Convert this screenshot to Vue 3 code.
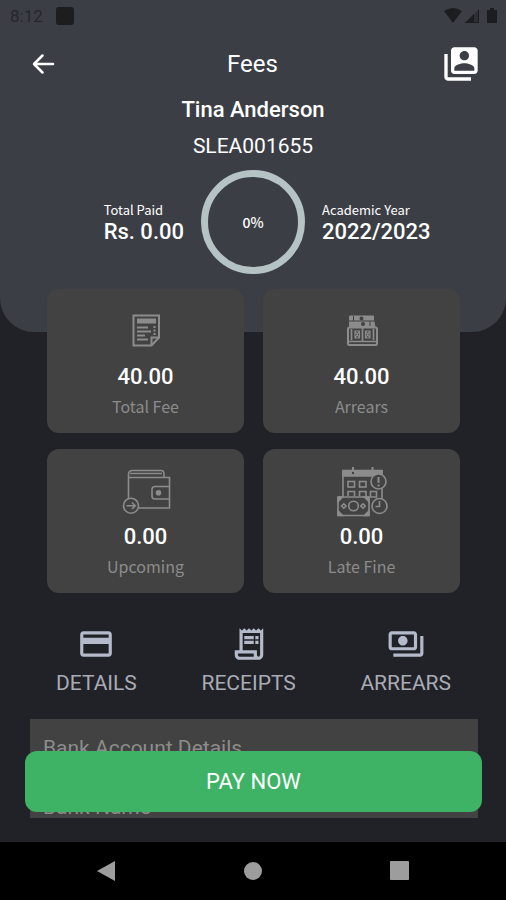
<script setup>
const cards = [
  { id: 'total', value: '40.00', label: 'Total Fee' },
  { id: 'arrears', value: '40.00', label: 'Arrears' },
  { id: 'upcoming', value: '0.00', label: 'Upcoming' },
  { id: 'fine', value: '0.00', label: 'Late Fine' },
]

const actions = [
  {
    label: 'DETAILS',
    path: 'M20 4H4c-1.11 0-1.99.89-1.99 2L2 18c0 1.11.89 2 2 2h16c1.11 0 2-.89 2-2V6c0-1.11-.89-2-2-2zm0 14H4v-6h16v6zm0-10H4V6h16v2z',
  },
  {
    label: 'RECEIPTS',
    path: 'M19.5 3.5 18 2l-1.5 1.5L15 2l-1.5 1.5L12 2l-1.5 1.5L9 2 7.5 3.5 6 2v14H3v3c0 1.66 1.34 3 3 3h12c1.66 0 3-1.34 3-3V2l-1.5 1.5zM15 20H6c-.55 0-1-.45-1-1v-1h10v2zm4-1c0 .55-.45 1-1 1s-1-.45-1-1v-3H8V5h11v14zM9 7h6v2H9zM16 7h2v2h-2zM9 10h6v2H9zM16 10h2v2h-2z',
  },
  {
    label: 'ARREARS',
    path: 'M19 14V6c0-1.1-.9-2-2-2H3c-1.1 0-2 .9-2 2v8c0 1.1.9 2 2 2h14c1.1 0 2-.9 2-2zm-2 0H3V6h14v8zm-7-7c-1.66 0-3 1.34-3 3s1.34 3 3 3 3-1.34 3-3-1.34-3-3-3zm13 0v11c0 1.1-.9 2-2 2H4v-2h17V7h2z',
  },
]
</script>

<template>
  <div class="screen">
    <main class="content">
      <header class="hero">
        <div class="status">
          <span class="time">8:12</span>
          <span class="notification"></span>
          <svg class="indicators" viewBox="0 0 56 18" aria-hidden="true">
            <path d="M0 4Q9-2 18 4L9 16Z" />
            <path d="M21 16 35 2V16Z" fill-opacity="0.45" />
            <path d="M21 16 30 7V16Z" />
            <path d="M34 3h1v13H30v-1h4Z" />
            <path d="M43 3h3V1h4v2h3v13H43Z" />
          </svg>
        </div>

        <div class="appbar">
          <button class="icon-button" type="button" aria-label="Back">
            <svg class="back" viewBox="0 0 24 24" aria-hidden="true">
              <path d="M21 12H2.500M10.500 3.500 2 12 10.500 20.500" />
            </svg>
          </button>
          <h1>Fees</h1>
          <button class="icon-button" type="button" aria-label="Switch account">
            <svg class="account" viewBox="0 0 24 24" aria-hidden="true">
              <path fill-rule="evenodd" d="M4 6H2v14c0 1.1.9 2 2 2h14v-2H4V6zm16-4H8c-1.100 0-2 .9-2 2v12c0 1.100.9 2 2 2h12c1.100 0 2-.9 2-2V4c0-1.100-.9-2-2-2zm-6 2.200c1.500 0 2.800 1.200 2.800 2.800S15.500 9.800 14 9.800 11.200 8.500 11.200 7s1.300-2.800 2.800-2.800zM20 16H8v-1.500c0-1.990 4-3 6-3s6 1.010 6 3V16z" />
            </svg>
          </button>
        </div>

        <p class="name">Tina Anderson</p>
        <p class="student-id">SLEA001655</p>

        <div class="summary">
          <dl class="stat stat-paid">
            <dt>Total Paid</dt>
            <dd>Rs. 0.00</dd>
          </dl>
          <div class="ring">0%</div>
          <dl class="stat">
            <dt>Academic Year</dt>
            <dd>2022/2023</dd>
          </dl>
        </div>
      </header>

      <section class="cards">
        <article v-for="card in cards" :key="card.id" class="card">
          <svg class="card-icon" viewBox="0 0 56 56" aria-hidden="true">
            <g v-if="card.id === 'total'">
              <path d="M15.500 12.500H41V34.500L33.500 42.500H15.500Z" stroke-width="2" />
              <path d="M33.500 42V34.500H41" stroke-width="2" />
              <path d="M19 18H38" stroke-width="5" />
              <path d="M19 24.500H30M19 28.500H33M19 32.500H27M19 36.500H30" stroke-width="2" />
              <path d="M36.500 23V32.500" stroke-width="2" stroke-dasharray="2 1.500" />
            </g>
            <g v-else-if="card.id === 'arrears'">
              <path class="solid" d="M15.500 13H39.500V17L41 23.500H15.500Z" />
              <path class="gap" d="M15 18H40M19.500 13V18M36 18V23" />
              <circle class="hole" cx="27.500" cy="15.500" r="2" />
              <circle class="hole" cx="29" cy="21" r="2" />
              <rect x="14" y="24.500" width="29" height="17.500" rx="1.500" stroke-width="2" />
              <path d="M14 38.500H43M17.500 26V37M39.500 26V37M28.500 25V38" stroke-width="1.700" />
              <path d="M21 28H25.500V35H21ZM31.500 28H36V35H31.500ZM21 28L25.500 35M25.500 28L21 35M31.500 28L36 35M36 28L31.500 35" stroke-width="1.200" />
            </g>
            <g v-else-if="card.id === 'upcoming'" stroke-width="1.600">
              <path d="M10.500 35V11.500Q10.500 7.500 14.500 7.500H43Q46 7.500 46 11V14.500" />
              <path d="M10.500 14.500H51.500V45H21M12 10.500H44" />
              <path d="M51.500 23.500H37Q34 23.500 34 26.500V33Q34 36 37 36H51.500" />
              <circle class="solid" cx="40.500" cy="29.700" r="2" />
              <circle cx="13" cy="42.700" r="7.500" />
              <path d="M8.500 42.700H17M14 39.500L17.200 42.700L14 46" />
            </g>
            <g v-else stroke-width="1.600">
              <path d="M9 33V7.500H48V35" />
              <path class="solid" d="M9 8H48V13H9Z" />
              <path d="M19 4V9M38.500 4V9" stroke-width="2" />
              <circle class="hole" cx="19" cy="10" r="1.200" />
              <rect x="14" y="18.500" width="6.500" height="5.500" />
              <rect x="25.500" y="18.500" width="6.500" height="5.500" />
              <path d="M14 33V28.500H20.500V33M25.500 33V28.500H32V33M36.500 28.500H42.500V34H36.500Z" />
              <circle class="cover" cx="44.500" cy="18.500" r="7.500" />
              <path d="M44.500 14V20M44.500 21.500V23.500" stroke-width="2" />
              <rect class="cover" x="4" y="34" width="31" height="18.500" rx="1" />
              <path class="solid" d="M4 34H8.500L4 38.500ZM35 34H30.500L35 38.500ZM4 52.500H8.500L4 48ZM35 52.500H30.500L35 48Z" />
              <circle cx="19.500" cy="43" r="4.800" />
              <path d="M9.800 40.800 12 43 9.800 45.200 7.600 43ZM29 40.800 31.200 43 29 45.200 26.800 43Z" />
              <circle class="cover" cx="45.500" cy="43" r="7.500" />
              <path d="M45.500 38V43.500H41.500" />
            </g>
          </svg>
          <strong>{{ card.value }}</strong>
          <span>{{ card.label }}</span>
        </article>
      </section>

      <nav class="actions" aria-label="Fee sections">
        <button v-for="action in actions" :key="action.label" class="action" type="button">
          <svg viewBox="0 0 24 24" aria-hidden="true"><path :d="action.path" /></svg>
          {{ action.label }}
        </button>
      </nav>

      <section class="bank">
        <h2>Bank Account Details</h2>
        <p>Bank Name</p>
      </section>

      <button class="pay" type="button">PAY NOW</button>
    </main>

    <nav class="system" aria-label="System navigation">
      <button type="button" aria-label="Back">
        <svg viewBox="0 0 22 22" aria-hidden="true"><path d="M2 11 20 1V21Z" /></svg>
      </button>
      <button type="button" aria-label="Home">
        <svg viewBox="0 0 22 22" aria-hidden="true"><circle cx="11" cy="11" r="9" /></svg>
      </button>
      <button type="button" aria-label="Recent apps">
        <svg viewBox="0 0 22 22" aria-hidden="true"><rect x="1" y="1" width="19" height="19" rx="1" /></svg>
      </button>
    </nav>
  </div>
</template>

<style>
body {
  margin: 0;
  background: #212228;
}
</style>

<style scoped>
.screen {
  display: flex;
  flex-direction: column;
  height: 100vh;
  background: #212228;
  color: #fff;
  font-family: Roboto, "Liberation Sans", sans-serif;
}

h1,
h2,
p,
dl,
dd {
  margin: 0;
}

button {
  padding: 0;
  border: 0;
  background: none;
  color: inherit;
  font: inherit;
}

svg {
  display: block;
}

.content {
  position: relative;
  display: flex;
  flex: 1;
  flex-direction: column;
  min-height: 0;
  padding-bottom: 24px;
  box-sizing: border-box;
  overflow: hidden;
}

.hero {
  flex: none;
  padding-bottom: 58px;
  border-radius: 0 0 34px 34px;
  background: #3c3e46;
  text-align: center;
}

.status {
  display: flex;
  align-items: center;
  height: 32px;
  padding: 0 6px 0 10px;
  color: #24262b;
  font-size: 17px;
}

.notification {
  width: 18px;
  height: 18px;
  margin-left: 13px;
  border-radius: 3px;
  background: #1b1d1f;
}

.indicators {
  width: 56px;
  height: 18px;
  margin-left: auto;
  fill: #1b1d20;
}

.appbar {
  display: flex;
  align-items: center;
  justify-content: space-between;
  height: 60px;
  padding: 3px 25px 0 24px;
  box-sizing: border-box;
}

.icon-button {
  display: flex;
  align-items: center;
  justify-content: center;
  width: 40px;
  height: 40px;
}

.back {
  width: 24px;
  height: 24px;
  fill: none;
  stroke: #fff;
  stroke-width: 2.5;
  stroke-linecap: round;
  stroke-linejoin: round;
}

.account {
  width: 40px;
  height: 40px;
  fill: #fff;
}

h1 {
  font-size: 24px;
  font-weight: 400;
}

.name {
  font-size: 22px;
  font-weight: 500;
  line-height: 36px;
}

.student-id {
  font-size: 21px;
  line-height: 36px;
}

.summary {
  display: grid;
  grid-template-columns: 1fr 104px 1fr;
  align-items: center;
  gap: 17px;
  padding-top: 6px;
}

.stat {
  justify-self: start;
  text-align: left;
}

.stat-paid {
  justify-self: end;
}

dt {
  font-family: "Noto Sans CJK SC", sans-serif;
  font-size: 13px;
  line-height: 20px;
}

dd {
  font-size: 22px;
  font-weight: 500;
  line-height: 24px;
}

.ring {
  display: flex;
  align-items: center;
  justify-content: center;
  height: 104px;
  border: 7px solid #b5c3c5;
  border-radius: 50%;
  box-sizing: border-box;
  font-family: "Noto Sans CJK SC", sans-serif;
  font-size: 14px;
  font-weight: 500;
}

.cards {
  display: grid;
  flex: none;
  grid-template-columns: 1fr 1fr;
  gap: 16px 19px;
  margin-top: -43px;
  padding: 0 46px 0 47px;
}

.card {
  display: flex;
  flex-direction: column;
  align-items: center;
  padding: 14px 0 16px;
  border-radius: 12px;
  background: #424242;
}

.card-icon {
  width: 56px;
  height: 56px;
  fill: none;
  stroke: #8c8c8c;
}

.solid {
  fill: #8c8c8c;
}

.gap {
  stroke: #424242;
  stroke-width: 1;
}

.hole {
  fill: #424242;
  stroke: none;
}

.cover {
  fill: #424242;
}

.card strong {
  font-size: 22px;
  font-weight: 500;
  line-height: 36px;
}

.card span {
  color: #8c8c8c;
  font-family: "Noto Sans CJK SC", sans-serif;
  font-size: 16px;
  line-height: 22px;
}

.actions {
  display: flex;
  flex: none;
  justify-content: space-between;
  padding: 32px 55px 23px 56px;
}

.action {
  display: flex;
  flex-direction: column;
  align-items: center;
  gap: 7px;
  color: #a9acb5;
  font-size: 21px;
  line-height: 26px;
}

.action svg {
  width: 38px;
  height: 38px;
  fill: #b4bac9;
}

.bank {
  flex: 1;
  min-height: 0;
  margin: 0 28px 0 30px;
  padding: 18px 13px 0;
  box-sizing: border-box;
  overflow: hidden;
  background: #424242;
  color: #8c8c8c;
}

.bank h2,
.bank p {
  font-size: 21px;
  font-weight: 400;
  line-height: 22px;
}

.bank p {
  margin-top: 37px;
}

.pay {
  position: absolute;
  right: 24px;
  bottom: 30px;
  left: 25px;
  height: 61px;
  border-radius: 12px;
  background: #3eb265;
  font-size: 22px;
}

.system {
  display: grid;
  flex: none;
  grid-template-columns: repeat(3, 1fr);
  height: 58px;
  padding: 0 33px;
  background: #000;
}

.system button {
  display: flex;
  align-items: center;
  justify-content: center;
}

.system svg {
  width: 22px;
  height: 22px;
  fill: #9d9d9d;
}
</style>
